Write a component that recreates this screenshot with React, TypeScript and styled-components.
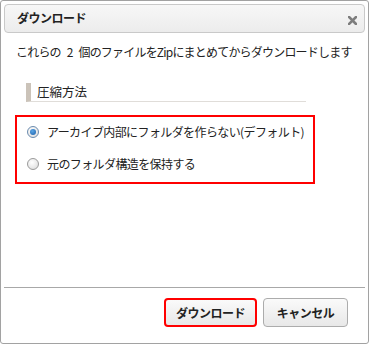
import styled, { createGlobalStyle } from "styled-components";

const GlobalStyle = createGlobalStyle`
  html, body {
    margin: 0;
    padding: 0;
    background: #fff;
  }
  body {
    font-family: "Noto Sans CJK JP", "Liberation Sans", sans-serif;
    font-size: 12px;
    color: #222;
  }
`;

const CloseIcon = () => (
  <svg width="9" height="9" viewBox="0 0 9 9">
    <path d="M1 1 L8 8 M8 1 L1 8" stroke="#7d7d7d" strokeWidth="2.6" strokeLinecap="square" />
  </svg>
);

const Radio = ({ checked }: { checked?: boolean }) => (
  <RadioMark $checked={checked}>{checked && <RadioDot />}</RadioMark>
);

export default function App() {
  return (
    <>
      <GlobalStyle />
      <Dialog>
        <TitleBar>
          <Title>ダウンロード</Title>
          <CloseButton>
            <CloseIcon />
          </CloseButton>
        </TitleBar>
        <Message>これらの 2 個のファイルをZipにまとめてからダウンロードします</Message>
        <SectionHeader>圧縮方法</SectionHeader>
        <OptionBox>
          <Option>
            <Radio checked />
            <span>アーカイブ内部にフォルダを作らない(デフォルト)</span>
          </Option>
          <Option>
            <Radio />
            <span>元のフォルダ構造を保持する</span>
          </Option>
        </OptionBox>
        <Spacer />
        <Footer>
          <Button $highlight>ダウンロード</Button>
          <Button>キャンセル</Button>
        </Footer>
      </Dialog>
    </>
  );
}

const Dialog = styled.div`
  box-sizing: border-box;
  width: 369px;
  height: 344px;
  padding: 3px 3px 0;
  border: 1px solid #a2a2a2;
  border-radius: 3px;
  background: #fff;
  display: flex;
  flex-direction: column;
`;

const TitleBar = styled.div`
  box-sizing: border-box;
  height: 29px;
  display: flex;
  align-items: center;
  justify-content: space-between;
  padding: 0 7px 0 12px;
  border: 1px solid #c9c9c9;
  border-radius: 4px;
  background: linear-gradient(#f7f7f7, #ececec);
`;

const Title = styled.div`
  font-weight: bold;
  font-size: 12px;
  margin-top: -3px;
  letter-spacing: -0.5px;
`;

const CloseButton = styled.div`
  display: flex;
  margin-top: 4px;
`;

const Message = styled.div`
  margin-top: 11px;
  padding-left: 12px;
  line-height: 16px;
  letter-spacing: -0.8px;
  word-spacing: 4px;
  white-space: pre;
`;

const SectionHeader = styled.div`
  box-sizing: border-box;
  margin: 23px 0 0 22px;
  width: 280px;
  height: 19px;
  line-height: 18px;
  padding-left: 6px;
  border-left: 5px solid #cbc3b9;
  border-bottom: 1px solid #e0ddd9;
  font-size: 12.5px;
`;

const OptionBox = styled.div`
  box-sizing: border-box;
  margin: 13px 0 0 11px;
  width: 300px;
  height: 69px;
  padding: 7px 0 0 10px;
  border: 2px solid #f00;
  display: flex;
  flex-direction: column;
  gap: 16px;
`;

const Option = styled.label`
  display: flex;
  align-items: center;
  gap: 8px;
  height: 16px;
  line-height: 16px;
  letter-spacing: -0.6px;
  white-space: nowrap;
`;

const RadioMark = styled.span<{ $checked?: boolean }>`
  box-sizing: border-box;
  width: 12px;
  height: 12px;
  border-radius: 50%;
  border: 1px solid ${(p) => (p.$checked ? "#6b8caf" : "#9a9a9a")};
  background: radial-gradient(circle at 40% 35%, #ffffff, #d8d8d8);
  display: flex;
  align-items: center;
  justify-content: center;
`;

const RadioDot = styled.span`
  width: 6px;
  height: 6px;
  border-radius: 50%;
  background: radial-gradient(circle at 40% 35%, #5aa6e6, #1a5ea8);
`;

const Spacer = styled.div`
  flex: 1;
`;

const Footer = styled.div`
  height: 56px;
  box-sizing: border-box;
  border-top: 1px solid #a8a8a8;
  padding: 10px 17px 0 0;
  display: flex;
  justify-content: flex-end;
  align-items: flex-start;
  gap: 6px;
`;

const Button = styled.button<{ $highlight?: boolean }>`
  box-sizing: border-box;
  height: 29px;
  width: ${(p) => (p.$highlight ? "93px" : "85px")};
  padding: 0;
  border: ${(p) => (p.$highlight ? "2px solid #f00" : "1px solid #acacac")};
  border-radius: 4px;
  background: linear-gradient(#fafafa, #e8e8e8);
  font-family: "Noto Sans CJK JP", "Liberation Sans", sans-serif;
  font-size: 12px;
  font-weight: bold;
  letter-spacing: -0.5px;
  color: #222;
`;
